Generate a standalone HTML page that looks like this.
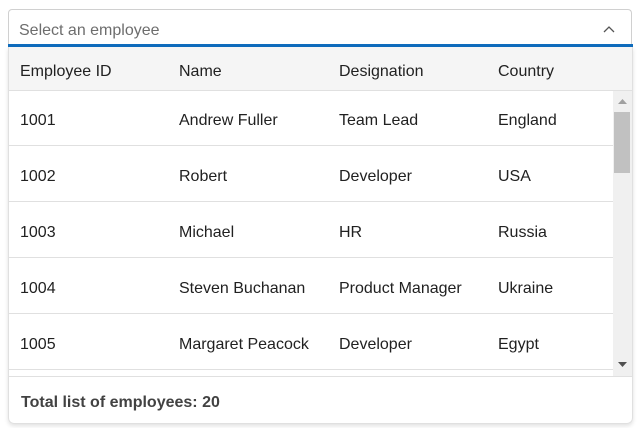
<!DOCTYPE html>
<html><head><style>
body{margin:0;width:642px;height:428px;background:#fff;font-family:"Liberation Sans",sans-serif;position:relative;overflow:hidden;color:#212121}
.input{position:absolute;left:8px;top:9px;width:624px;height:36px;border:1px solid #d0d0d0;border-bottom:none;border-radius:4px 4px 0 0;box-sizing:border-box}
.input span{position:absolute;left:10px;top:12px;font-size:16px;color:#6d6d6d}
.blue{position:absolute;left:8px;top:44px;width:625px;height:3px;background:#0f6cbd}
.pop{position:absolute;left:8px;top:47px;width:625px;height:377px;border:1px solid #e0e0e0;border-top:none;border-radius:0 0 6px 6px;box-sizing:border-box;box-shadow:0 2px 4px rgba(0,0,0,.12);overflow:hidden}
.hdr{position:absolute;left:0;top:0;width:623px;height:43px;background:#f5f5f5;border-bottom:1px solid #e0e0e0}
.c{position:absolute;font-size:16px;white-space:nowrap}
.row{position:absolute;left:0;width:604px;height:55px;border-bottom:1px solid #e0e0e0}
.sb{position:absolute;left:604px;top:44px;width:20px;height:285px;background:#f0f0f0}
.th{position:absolute;left:605px;top:65px;width:16px;height:61px;background:#c1c1c1}
.foot{position:absolute;left:0;top:329px;width:623px;border-top:1px solid #e0e0e0;height:48px}
.foot span{position:absolute;left:12px;top:17px;font-weight:bold;font-size:16px;color:#424242}
</style></head><body>
<div class="input"><span>Select an employee</span>
<svg style="position:absolute;left:594px;top:15px" width="12" height="8" viewBox="0 0 12 8"><path d="M1 7L6 2L11 7" fill="none" stroke="#555" stroke-width="1.3"/></svg></div>
<div class="blue"></div>
<div class="pop">
<div class="hdr">
<div class="c" style="left:11px;top:16px">Employee ID</div>
<div class="c" style="left:170px;top:16px">Name</div>
<div class="c" style="left:330px;top:16px">Designation</div>
<div class="c" style="left:489px;top:16px">Country</div>
</div>
<div class="row" style="top:43px"><div class="c" style="left:11px;top:22px">1001</div><div class="c" style="left:170px;top:22px">Andrew Fuller</div><div class="c" style="left:330px;top:22px">Team Lead</div><div class="c" style="left:489px;top:22px">England</div></div>
<div class="row" style="top:99px"><div class="c" style="left:11px;top:22px">1002</div><div class="c" style="left:170px;top:22px">Robert</div><div class="c" style="left:330px;top:22px">Developer</div><div class="c" style="left:489px;top:22px">USA</div></div>
<div class="row" style="top:155px"><div class="c" style="left:11px;top:22px">1003</div><div class="c" style="left:170px;top:22px">Michael</div><div class="c" style="left:330px;top:22px">HR</div><div class="c" style="left:489px;top:22px">Russia</div></div>
<div class="row" style="top:211px"><div class="c" style="left:11px;top:22px">1004</div><div class="c" style="left:170px;top:22px">Steven Buchanan</div><div class="c" style="left:330px;top:22px">Product Manager</div><div class="c" style="left:489px;top:22px">Ukraine</div></div>
<div class="row" style="top:267px"><div class="c" style="left:11px;top:22px">1005</div><div class="c" style="left:170px;top:22px">Margaret Peacock</div><div class="c" style="left:330px;top:22px">Developer</div><div class="c" style="left:489px;top:22px">Egypt</div></div>
<div class="sb"></div><div class="th"></div>
<svg style="position:absolute;left:609px;top:52px" width="9" height="6"><path d="M0 5L4.5 0L9 5Z" fill="#a0a0a0"/></svg>
<svg style="position:absolute;left:609px;top:315px" width="9" height="6"><path d="M0 0L4.5 5L9 0Z" fill="#505050"/></svg>
<div class="foot"><span>Total list of employees: 20</span></div>
</div>
</body></html>
